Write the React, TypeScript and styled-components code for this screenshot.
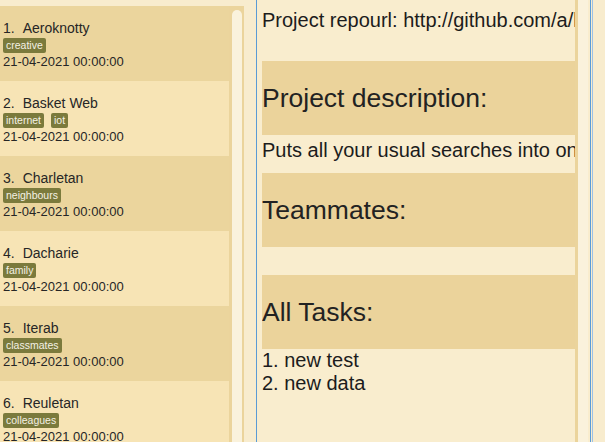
import React from "react";
import styled, { createGlobalStyle } from "styled-components";

const Global = createGlobalStyle`
  html, body { margin: 0; padding: 0; }
  body {
    background: #f8ecce;
    font-family: "Liberation Sans", Arial, sans-serif;
    color: #222;
    overflow: hidden;
  }
`;

const Window = styled.div`
  display: flex;
  width: 605px;
  height: 442px;
  overflow: hidden;
  background: #f8ecce;
`;

const ListPane = styled.div`
  display: flex;
  width: 244px;
  margin-top: 6px;
  background: #ebd49c;
  flex-shrink: 0;
  overflow: hidden;
`;

const List = styled.div`
  display: flex;
  flex-direction: column;
  width: 229px;
  flex-shrink: 0;
`;

const Card = styled.div<{ $alt: boolean }>`
  display: flex;
  flex-direction: column;
  align-items: flex-start;
  height: 75px;
  box-sizing: border-box;
  padding: 14px 0 12px 3px;
  background: ${(p) => (p.$alt ? "#f7e4b5" : "#ebd59d")};
  flex-shrink: 0;
`;

const Title = styled.div`
  font-size: 14px;
  line-height: 16px;
  color: #262626;
  white-space: nowrap;
`;

const Index = styled.span`
  margin-right: 8px;
`;

const Tags = styled.div`
  display: flex;
  gap: 7px;
  margin-top: 2px;
`;

const Tag = styled.span`
  display: block;
  height: 15px;
  line-height: 15px;
  padding: 0 3px;
  font-size: 10.5px;
  color: #f4f1e4;
  background: #7b7a3c;
  border-radius: 2px;
`;

const DateLine = styled.div`
  margin-top: 1px;
  font-size: 13px;
  line-height: 15px;
  color: #262626;
  white-space: nowrap;
`;

const ListScroll = styled.div`
  width: 10px;
  margin: 4px 2px 0 3px;
  background: #faf2dc;
  border-radius: 5px 5px 0 0;
  flex-shrink: 0;
`;

const Divider = styled.div`
  width: 12px;
  flex-shrink: 0;
`;

const DetailPane = styled.div`
  display: flex;
  width: 335px;
  box-sizing: border-box;
  height: 442px;
  padding-left: 5px;
  border-left: 1px solid #5b9bd5;
  border-right: 1px solid #5b9bd5;
  background: #f9edce;
  flex-shrink: 0;
`;

const Detail = styled.div`
  display: flex;
  flex-direction: column;
  width: 313px;
  flex-shrink: 0;
  overflow: hidden;
  padding-top: 9px;
`;

const Line = styled.div`
  font-size: 20px;
  line-height: 23px;
  color: #1c1c1c;
  white-space: nowrap;
`;

const Band = styled.div<{ $top: number }>`
  display: flex;
  align-items: center;
  height: 74px;
  margin-top: ${(p) => p.$top}px;
  background: #ebd39b;
  flex-shrink: 0;
`;

const Heading = styled.div`
  font-size: 26.5px;
  line-height: 30px;
  color: #222;
  white-space: nowrap;
`;

const Body = styled.div<{ $pad: string; $min?: number }>`
  padding: ${(p) => p.$pad};
  min-height: ${(p) => p.$min ?? 0}px;
  flex-shrink: 0;
`;

const DetailScroll = styled.div`
  width: 10px;
  margin-right: 2px;
  border-left: 3px solid #ebd49c;
  background: #faf2dc;
  flex-shrink: 0;
`;

const NextPane = styled.div`
  flex: 1;
  margin-left: 1px;
  border-left: 1px solid #9dc1e6;
  background: #f8ecce;
`;

const people = [
  { name: "Aeroknotty", tags: ["creative"] },
  { name: "Basket Web", tags: ["internet", "iot"] },
  { name: "Charletan", tags: ["neighbours"] },
  { name: "Dacharie", tags: ["family"] },
  { name: "Iterab", tags: ["classmates"] },
  { name: "Reuletan", tags: ["colleagues"] },
  { name: "Sollentus", tags: ["friends"] },
];

export default function App() {
  return (
    <>
      <Global />
      <Window>
        <ListPane>
          <List>
            {people.map((p, i) => (
              <Card key={p.name} $alt={i % 2 === 1}>
                <Title>
                  <Index>{i + 1}.</Index>
                  {p.name}
                </Title>
                <Tags>
                  {p.tags.map((t) => (
                    <Tag key={t}>{t}</Tag>
                  ))}
                </Tags>
                <DateLine>21-04-2021 00:00:00</DateLine>
              </Card>
            ))}
          </List>
          <ListScroll />
        </ListPane>
        <Divider />
        <DetailPane>
          <Detail>
            <Line>Project repourl: http://github.com/a/link</Line>
            <Band $top={29}>
              <Heading>Project description:</Heading>
            </Band>
            <Body $pad="4px 0 11px">
              <Line>Puts all your usual searches into one place</Line>
            </Body>
            <Band $top={0}>
              <Heading>Teammates:</Heading>
            </Band>
            <Body $pad="0" $min={28} />
            <Band $top={0}>
              <Heading>All Tasks:</Heading>
            </Band>
            <Body $pad="0">
              <Line>1. new test</Line>
              <Line>2. new data</Line>
            </Body>
          </Detail>
          <DetailScroll />
        </DetailPane>
        <NextPane />
      </Window>
    </>
  );
}
